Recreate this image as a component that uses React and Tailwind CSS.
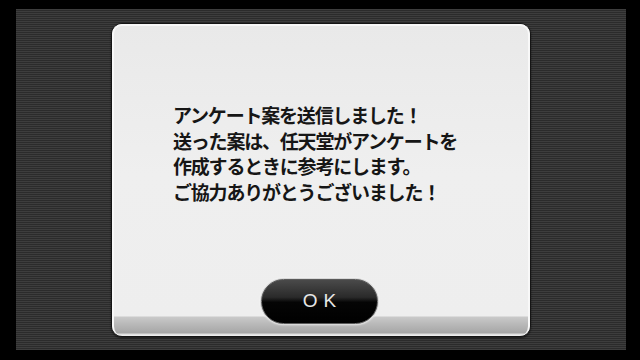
import React from "react";

const lines = [
  "アンケート案を送信しました！",
  "送った案は、任天堂がアンケートを",
  "作成するときに参考にします。",
  "ご協力ありがとうございました！",
];

const App = () => {
  return (
    <div className="w-[640px] h-[360px] bg-black pt-[9px] pl-[16px] overflow-hidden">
      <div className="w-[610px] h-[341px] bg-[repeating-linear-gradient(to_bottom,#3d3d3d_0px,#3d3d3d_1px,#2b2b2b_1px,#2b2b2b_2px)] pt-[14px] pl-[95px]">
        <div className="w-[420px] h-[314px] rounded-[11px] border border-[#151515] shadow-[0_1px_2px_rgba(0,0,0,0.6)] bg-[linear-gradient(to_bottom,#e9e9e9_0px,#efefef_150px,#eeeeee_292px,#c9c9c9_293px,#b9b9b9_300px,#a6a6a6_309px,#dcdcdc_310px,#f2f2f2_312px)] flex flex-col">
          <div className="flex-1 rounded-[10px] border-l-2 border-t-2 border-r-2 border-[#f8f8f8] flex flex-col">
            <div
              className="pt-[76px] pl-[59px] text-[19px] leading-[25.7px] tracking-[-1.2px] text-[#161616] font-semibold"
              style={{ fontFamily: '"Noto Sans CJK JP", "Noto Sans", sans-serif' }}
            >
              {lines.map((l, i) => (
                <div key={i} className="whitespace-nowrap">
                  {l}
                </div>
              ))}
            </div>
            <div className="mt-[73px] flex justify-center pr-[3px]">
              <div className="w-[119px] h-[47px] rounded-full p-[1px] bg-[#d8d8d8] shadow-[0_0_2px_rgba(255,255,255,0.8)]">
                <div className="w-full h-full rounded-full border border-[#5a5a5a] bg-[linear-gradient(to_bottom,#4a4a4a_0%,#2a2a2a_40%,#050505_52%,#000000_100%)] flex items-center justify-center">
                  <span
                    className="text-[19px] text-[#e6e6e6] tracking-[6px] pl-[6px]"
                    style={{ fontFamily: '"Liberation Sans", Arial, sans-serif' }}
                  >
                    OK
                  </span>
                </div>
              </div>
            </div>
          </div>
        </div>
      </div>
    </div>
  );
};

export default App;
